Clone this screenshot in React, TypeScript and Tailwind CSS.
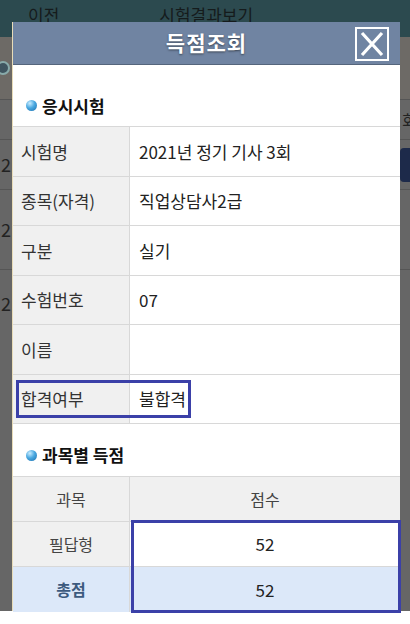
import React from "react";

const font = { fontFamily: '"Noto Sans CJK KR", "Noto Sans", sans-serif' };

function Bullet() {
  return (
    <span
      className="inline-block w-[11px] h-[11px] rounded-full mr-[5px]"
      style={{ background: "radial-gradient(circle at 35% 30%, #c9ecff 0%, #4aa8e0 45%, #1a6fae 100%)" }}
    />
  );
}

const infoRows: [string, string][] = [
  ["시험명", "2021년 정기 기사 3회"],
  ["종목(자격)", "직업상담사2급"],
  ["구분", "실기"],
  ["수험번호", "07"],
  ["이름", ""],
];

export default function App() {
  return (
    <div className="relative w-[410px] h-[624px] overflow-hidden bg-[#666666]" style={font}>
      {/* background page */}
      <div className="flex flex-col w-full">
        <div className="h-[37px] bg-[#2c4a4f] flex items-start pt-[2px] text-[17px] text-[#151b1c]">
          <span className="ml-[28px]">이전</span>
          <span className="ml-[100px]">시험결과보기</span>
        </div>
        <div className="h-[63px] bg-[#6d6a66] border-b border-[#555] flex items-center">
          <span className="w-[14px] h-[14px] rounded-full bg-[#3f5560] border-2 border-[#8aa] -ml-[4px]" />
        </div>
        <div className="h-[40px] border-b border-[#555] flex justify-end items-center text-[16px] text-[#222]">
          <span className="w-[8px] overflow-hidden whitespace-nowrap">회</span>
        </div>
        <div className="h-[50px] border-b border-[#555] flex items-center justify-between text-[18px] text-[#222]">
          <span className="ml-[1px]">2</span>
          <span className="w-[14px] h-[34px] rounded-[4px] bg-[#1d2a4a] -mr-[4px]" />
        </div>
        <div className="h-[80px] border-b border-[#555] flex items-center text-[18px] text-[#222]">
          <span className="ml-[1px]">2</span>
        </div>
        <div className="h-[60px] flex items-start text-[18px] text-[#222]">
          <span className="ml-[1px] mt-[20px]">2</span>
        </div>
      </div>
      <div className="absolute left-0 right-0 bottom-0 h-[13px] bg-white" />

      {/* modal */}
      <div className="absolute left-[12px] top-[22px] w-[388px] h-[589px] bg-white border-l border-[#e8dcb8] flex flex-col">
        <div className="h-[43px] bg-[#7084a2] border-b border-[#55657c] flex items-center justify-center relative shrink-0">
          <span className="text-white text-[21px] font-bold tracking-[1px]" style={{ textShadow: "0 1px 2px rgba(0,0,0,0.5)" }}>
            득점조회
          </span>
          <div className="absolute right-[11px] top-[5px] w-[34px] h-[34px] border-2 border-white flex items-center justify-center">
            <svg width="26" height="26" viewBox="0 0 26 26">
              <path d="M3 2 L23 24 M23 2 L3 24" stroke="white" strokeWidth="3.2" />
            </svg>
          </div>
        </div>

        <div className="h-[61px] flex items-end pb-[8px] pl-[13px] shrink-0">
          <span className="flex items-center text-[17px] font-bold text-[#111]">
            <Bullet />
            응시시험
          </span>
        </div>

        <div className="border-t border-[#d8d8d8] flex flex-col">
          {infoRows.map(([k, v]) => (
            <div key={k} className="flex h-[49.6px] border-b border-[#d8d8d8]">
              <div className="w-[117px] bg-[#f0f0f0] border-r border-[#d8d8d8] flex items-center pl-[8px] text-[17px] text-[#333]">{k}</div>
              <div className="flex-1 flex items-center pl-[9px] text-[17px] text-[#222]">{v}</div>
            </div>
          ))}
          <div className="flex h-[49px] border-b border-[#d8d8d8] relative">
            <div className="w-[117px] bg-[#f0f0f0] border-r border-[#d8d8d8] flex items-center pl-[8px] text-[17px] text-[#333]">합격여부</div>
            <div className="flex-1 flex items-center pl-[9px] text-[17px] text-[#222]">불합격</div>
            <div className="absolute left-[3px] top-[5px] w-[175px] h-[38px] border-[3px] border-[#3b40a8]" />
          </div>
        </div>

        <div className="h-[52px] flex items-end pb-[8px] pl-[13px] shrink-0">
          <span className="flex items-center text-[17px] font-bold text-[#111]">
            <Bullet />
            과목별 득점
          </span>
        </div>

        <div className="border-t border-[#d8d8d8] flex flex-col relative">
          <div className="flex h-[45px] border-b border-[#d8d8d8] bg-[#f0f0f0]">
            <div className="w-[117px] border-r border-[#d8d8d8] flex items-center justify-center text-[16px] text-[#444]">과목</div>
            <div className="flex-1 flex items-center justify-center text-[16px] text-[#444]">점수</div>
          </div>
          <div className="flex h-[45px] border-b border-[#d8d8d8]">
            <div className="w-[117px] bg-[#f0f0f0] border-r border-[#d8d8d8] flex items-center justify-center text-[16px] text-[#444]">필답형</div>
            <div className="flex-1 flex items-center justify-center text-[17px] text-[#222]">52</div>
          </div>
          <div className="flex h-[45px] bg-[#dce8f9]">
            <div className="w-[117px] border-r border-[#d8d8d8] flex items-center justify-center text-[16px] font-bold text-[#3d5a7e]">총점</div>
            <div className="flex-1 flex items-center justify-center text-[17px] text-[#222]">52</div>
          </div>
          <div className="absolute left-[118px] top-[43px] w-[270px] h-[93px] border-[3px] border-[#3b40a8]" />
        </div>
      </div>
    </div>
  );
}
